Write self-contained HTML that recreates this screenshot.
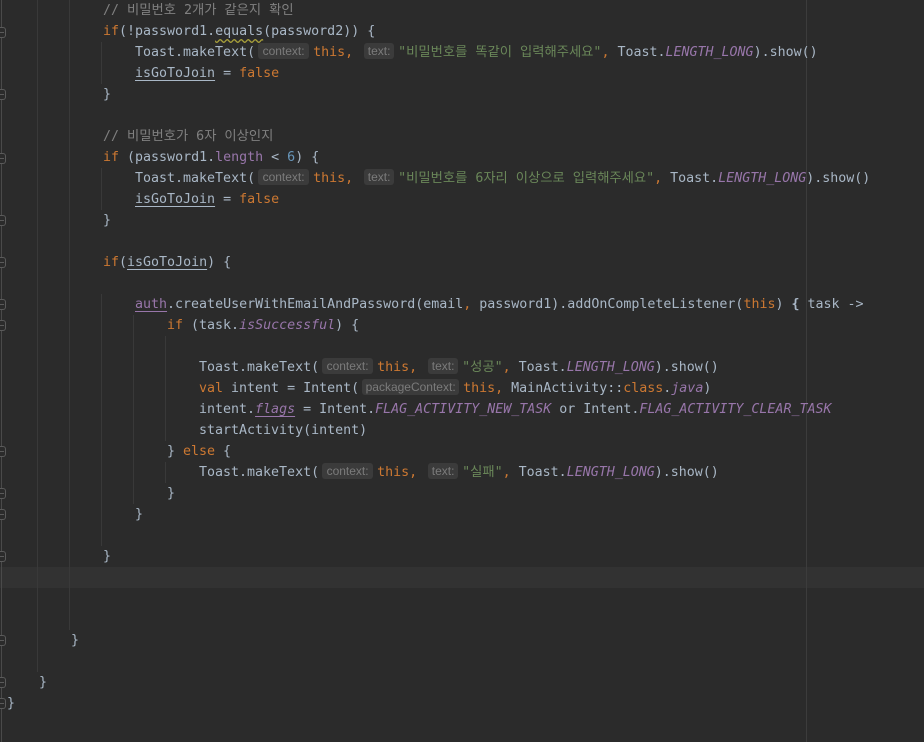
<!DOCTYPE html>
<html><head><meta charset="utf-8">
<style>
html,body{margin:0;padding:0;}
body{width:924px;height:742px;background:#2b2b2b;position:relative;overflow:hidden;
font-family:"DejaVu Sans Mono","Noto Sans CJK KR",monospace;font-size:13.3px;color:#a9b7c6;}
.l{position:absolute;white-space:pre;height:21px;line-height:21px;}
.k{color:#cc7832}.c{color:#808080}.s{color:#6a8759}.p{color:#9876aa}.i{font-style:italic}
.u{text-decoration:underline;text-underline-offset:3px}
.w{text-decoration:underline wavy #a8a03a;text-underline-offset:3px}
.h{display:inline-block;height:16px;line-height:16px;background:#3b3b3b;color:#7b7b7b;border-radius:3px;
font-family:"Liberation Sans",sans-serif;font-size:12px;text-align:center;vertical-align:1px;margin-left:3px;margin-right:4px;}
.g{position:absolute;width:1px;background:#393939;}
.cur{position:absolute;left:0;top:567px;width:924px;height:21px;background:#323232;}
.fold{position:absolute;left:0;width:5px;height:9px;border:1px solid #5a5a5a;border-left:none;border-radius:0 3px 3px 0;background:#2b2b2b;}
.fold:after{content:"";position:absolute;left:0;top:4px;width:4px;height:1px;background:#5a5a5a;}
</style></head><body>
<div class="cur"></div>
<div style="position:absolute;left:806px;top:0;width:1px;height:742px;background:#3c3c3c"></div>
<div style="position:absolute;left:1px;top:0;width:1px;height:742px;background:#4a4a4a"></div>
<div class="g" style="left:37px;top:0;height:672px"></div>
<div class="g" style="left:69px;top:0;height:630px"></div>
<div class="g" style="left:101px;top:42px;height:42px"></div>
<div class="g" style="left:101px;top:168px;height:42px"></div>
<div class="g" style="left:101px;top:294px;height:252px"></div>
<div class="g" style="left:133px;top:315px;height:189px"></div>
<div class="g" style="left:165px;top:336px;height:105px"></div>
<div class="g" style="left:165px;top:462px;height:21px"></div>

<div class="fold" style="top:27px"></div>
<div class="fold" style="top:89px"></div>
<div class="fold" style="top:153px"></div>
<div class="fold" style="top:215px"></div>
<div class="fold" style="top:257px"></div>
<div class="fold" style="top:299px"></div>
<div class="fold" style="top:320px"></div>
<div class="fold" style="top:446px"></div>
<div class="fold" style="top:488px"></div>
<div class="fold" style="top:509px"></div>
<div class="fold" style="top:551px"></div>
<div class="fold" style="top:635px"></div>
<div class="fold" style="top:677px"></div>
<div class="fold" style="top:698px"></div>

<div class="l c" style="top:0;left:103px">// 비밀번호 2개가 같은지 확인</div>
<div class="l" style="top:21px;left:103px"><span class="k">if</span>(!password1.<span class="w">equals</span>(password2)) {</div>
<div class="l" style="top:42px;left:135px">Toast.makeText(<span class="h" style="width:51px">context:</span><span class="k">this, </span><span class="h" style="width:30px">text:</span><span class="s">"비밀번호를 똑같이 입력해주세요"</span><span class="k">, </span>Toast.<span class="p i">LENGTH_LONG</span>).show()</div>
<div class="l" style="top:63px;left:135px"><span class="u">isGoToJoin</span> = <span class="k">false</span></div>
<div class="l" style="top:84px;left:103px">}</div>
<div class="l c" style="top:126px;left:103px">// 비밀번호가 6자 이상인지</div>
<div class="l" style="top:147px;left:103px"><span class="k">if </span>(password1.<span class="p">length</span> &lt; <span style="color:#6897bb">6</span>) {</div>
<div class="l" style="top:168px;left:135px">Toast.makeText(<span class="h" style="width:51px">context:</span><span class="k">this, </span><span class="h" style="width:30px">text:</span><span class="s">"비밀번호를 6자리 이상으로 입력해주세요"</span><span class="k">, </span>Toast.<span class="p i">LENGTH_LONG</span>).show()</div>
<div class="l" style="top:189px;left:135px"><span class="u">isGoToJoin</span> = <span class="k">false</span></div>
<div class="l" style="top:210px;left:103px">}</div>
<div class="l" style="top:252px;left:103px"><span class="k">if</span>(<span class="u">isGoToJoin</span>) {</div>
<div class="l" style="top:294px;left:135px"><span class="p u">auth</span>.createUserWithEmailAndPassword(email<span class="k">, </span>password1).addOnCompleteListener(<span class="k">this</span>) <b style="font-weight:bold">{</b> task -&gt;</div>
<div class="l" style="top:315px;left:167px"><span class="k">if </span>(task.<span class="p i">isSuccessful</span>) {</div>
<div class="l" style="top:357px;left:199px">Toast.makeText(<span class="h" style="width:51px">context:</span><span class="k">this, </span><span class="h" style="width:30px">text:</span><span class="s">"성공"</span><span class="k">, </span>Toast.<span class="p i">LENGTH_LONG</span>).show()</div>
<div class="l" style="top:378px;left:199px"><span class="k">val </span>intent = Intent(<span class="h" style="width:97px">packageContext:</span><span class="k">this, </span>MainActivity::<span class="k">class</span>.<span class="p i">java</span>)</div>
<div class="l" style="top:399px;left:199px">intent.<span class="p i u">flags</span> = Intent.<span class="p i">FLAG_ACTIVITY_NEW_TASK</span> <span>or</span> Intent.<span class="p i">FLAG_ACTIVITY_CLEAR_TASK</span></div>
<div class="l" style="top:420px;left:199px">startActivity(intent)</div>
<div class="l" style="top:441px;left:167px">} <span class="k">else</span> {</div>
<div class="l" style="top:462px;left:199px">Toast.makeText(<span class="h" style="width:51px">context:</span><span class="k">this, </span><span class="h" style="width:30px">text:</span><span class="s">"실패"</span><span class="k">, </span>Toast.<span class="p i">LENGTH_LONG</span>).show()</div>
<div class="l" style="top:483px;left:167px">}</div>
<div class="l" style="top:504px;left:135px">}</div>
<div class="l" style="top:546px;left:103px">}</div>
<div class="l" style="top:630px;left:71px">}</div>
<div class="l" style="top:672px;left:39px">}</div>
<div class="l" style="top:693px;left:7px">}</div>
</body></html>
